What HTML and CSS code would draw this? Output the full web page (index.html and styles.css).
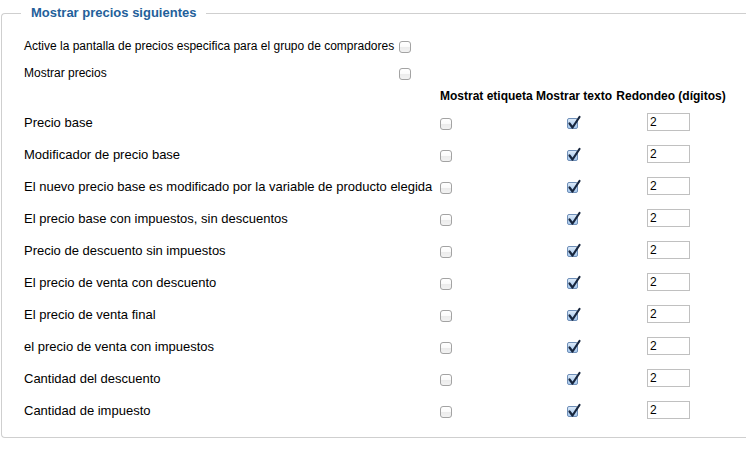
FILE: index.html
```html
<!DOCTYPE html>
<html lang="es">

<head>
    <meta charset="UTF-8">
    <meta name="viewport" content="width=device-width, initial-scale=1.0">
    <title>Mostrar precios</title>
    <link rel="stylesheet" href="styles.css">
</head>

<body>
    <div class="page">
        <fieldset class="prices">
            <legend>Mostrar precios siguientes</legend>

            <table class="toplist">
                <tr>
                    <td>Active la pantalla de precios especifica para el grupo de compradores</td>
                    <td><span class="box"></span></td>
                </tr>
                <tr>
                    <td>Mostrar precios</td>
                    <td><span class="box"></span></td>
                </tr>
            </table>

            <table class="pricelist">
                <colgroup>
                    <col class="c-label">
                    <col class="c-label2">
                    <col class="c-text">
                    <col class="c-round">
                </colgroup>
                <tr class="head">
                    <th></th>
                    <th class="left">Mostrat etiqueta</th>
                    <th>Mostrar texto</th>
                    <th>Redondeo (dígitos)</th>
                </tr>
                <tr>
                    <td>Precio base</td>
                    <td><span class="box"></span></td>
                    <td class="mid"><span class="box on"><svg viewBox="0 0 14 14"><path d="M2.5 7.5 L5.5 11.5 L12.5 1"/></svg></span></td>
                    <td class="mid"><input class="digits" type="text" value="2"></td>
                </tr>
                <tr>
                    <td>Modificador de precio base</td>
                    <td><span class="box"></span></td>
                    <td class="mid"><span class="box on"><svg viewBox="0 0 14 14"><path d="M2.5 7.5 L5.5 11.5 L12.5 1"/></svg></span></td>
                    <td class="mid"><input class="digits" type="text" value="2"></td>
                </tr>
                <tr>
                    <td>El nuevo precio base es modificado por la variable de producto elegida</td>
                    <td><span class="box"></span></td>
                    <td class="mid"><span class="box on"><svg viewBox="0 0 14 14"><path d="M2.5 7.5 L5.5 11.5 L12.5 1"/></svg></span></td>
                    <td class="mid"><input class="digits" type="text" value="2"></td>
                </tr>
                <tr>
                    <td>El precio base con impuestos, sin descuentos</td>
                    <td><span class="box"></span></td>
                    <td class="mid"><span class="box on"><svg viewBox="0 0 14 14"><path d="M2.5 7.5 L5.5 11.5 L12.5 1"/></svg></span></td>
                    <td class="mid"><input class="digits" type="text" value="2"></td>
                </tr>
                <tr>
                    <td>Precio de descuento sin impuestos</td>
                    <td><span class="box"></span></td>
                    <td class="mid"><span class="box on"><svg viewBox="0 0 14 14"><path d="M2.5 7.5 L5.5 11.5 L12.5 1"/></svg></span></td>
                    <td class="mid"><input class="digits" type="text" value="2"></td>
                </tr>
                <tr>
                    <td>El precio de venta con descuento</td>
                    <td><span class="box"></span></td>
                    <td class="mid"><span class="box on"><svg viewBox="0 0 14 14"><path d="M2.5 7.5 L5.5 11.5 L12.5 1"/></svg></span></td>
                    <td class="mid"><input class="digits" type="text" value="2"></td>
                </tr>
                <tr>
                    <td>El precio de venta final</td>
                    <td><span class="box"></span></td>
                    <td class="mid"><span class="box on"><svg viewBox="0 0 14 14"><path d="M2.5 7.5 L5.5 11.5 L12.5 1"/></svg></span></td>
                    <td class="mid"><input class="digits" type="text" value="2"></td>
                </tr>
                <tr>
                    <td>el precio de venta con impuestos</td>
                    <td><span class="box"></span></td>
                    <td class="mid"><span class="box on"><svg viewBox="0 0 14 14"><path d="M2.5 7.5 L5.5 11.5 L12.5 1"/></svg></span></td>
                    <td class="mid"><input class="digits" type="text" value="2"></td>
                </tr>
                <tr>
                    <td>Cantidad del descuento</td>
                    <td><span class="box"></span></td>
                    <td class="mid"><span class="box on"><svg viewBox="0 0 14 14"><path d="M2.5 7.5 L5.5 11.5 L12.5 1"/></svg></span></td>
                    <td class="mid"><input class="digits" type="text" value="2"></td>
                </tr>
                <tr>
                    <td>Cantidad de impuesto</td>
                    <td><span class="box"></span></td>
                    <td class="mid"><span class="box on"><svg viewBox="0 0 14 14"><path d="M2.5 7.5 L5.5 11.5 L12.5 1"/></svg></span></td>
                    <td class="mid"><input class="digits" type="text" value="2"></td>
                </tr>
            </table>
        </fieldset>
    </div>
</body>

</html>
```

FILE: styles.css
```css
body {
    margin: 0;
    overflow: hidden;
    background-color: #fff;
    font-family: "Liberation Sans", Arial, sans-serif;
    color: #000;
}

.page {
    padding: 5px 0 0 1px;
}

.prices {
    margin: 0;
    padding: 0 0 11px 20px;
    border: 1px solid #cfcfcf;
    border-right: none;
    border-radius: 4px 0 0 4px;
}

.prices>legend {
    margin-left: -1px;
    padding: 0 10px;
    font-size: 13px;
    font-weight: bold;
    line-height: 16px;
    color: #23609a;
}

table {
    border-collapse: collapse;
    border-spacing: 0;
}

td,
th {
    padding: 0 2px;
}

.toplist {
    margin-top: 11px;
    font-size: 12px;
}

.toplist td {
    height: 27px;
    vertical-align: middle;
}

.toplist .box {
    margin: 2px 0 0 1px;
}

.pricelist {
    table-layout: fixed;
    width: 706px;
    font-size: 13px;
}

.c-label {
    width: 416px;
}

.c-label2 {
    width: 96px;
}

.c-text {
    width: 80px;
}

.c-round {
    width: 114px;
}

.pricelist td {
    height: 32px;
    white-space: nowrap;
    vertical-align: middle;
}

.pricelist .head th {
    height: 20px;
    font-size: 12px;
    font-weight: bold;
    text-align: center;
    white-space: nowrap;
    vertical-align: middle;
}

.pricelist .head th.left {
    text-align: left;
}

.pricelist td:nth-child(2) .box {
    margin: 1px 0 0 0;
}

.mid {
    text-align: center;
}

.box {
    display: inline-block;
    box-sizing: border-box;
    width: 12px;
    height: 12px;
    border: 1px solid #a3a3a3;
    border-radius: 3px;
    background: linear-gradient(#ffffff 0%, #fbfbfb 45%, #ececec 55%, #f2f2f2 100%);
    vertical-align: middle;
}

.box.on {
    position: relative;
    width: 11px;
    height: 11px;
    margin: 0 4px 0 0;
    border-color: #6f8fb8;
    border-radius: 2px;
    background: linear-gradient(#dbe9f8 0%, #bcd6f2 50%, #a9caee 100%);
}

.box.on svg {
    position: absolute;
    left: -1px;
    top: -3px;
    width: 14px;
    height: 14px;
    overflow: visible;
}

.box.on path {
    fill: none;
    stroke: #18273f;
    stroke-width: 2.2;
    stroke-linecap: round;
    stroke-linejoin: round;
}

.digits {
    box-sizing: border-box;
    width: 43px;
    height: 18px;
    margin: 0 5px 0 0;
    padding: 0 2px;
    border: 1px solid #c0c0c0;
    font-family: "Liberation Sans", Arial, sans-serif;
    font-size: 12px;
    color: #000;
    vertical-align: middle;
}
```
